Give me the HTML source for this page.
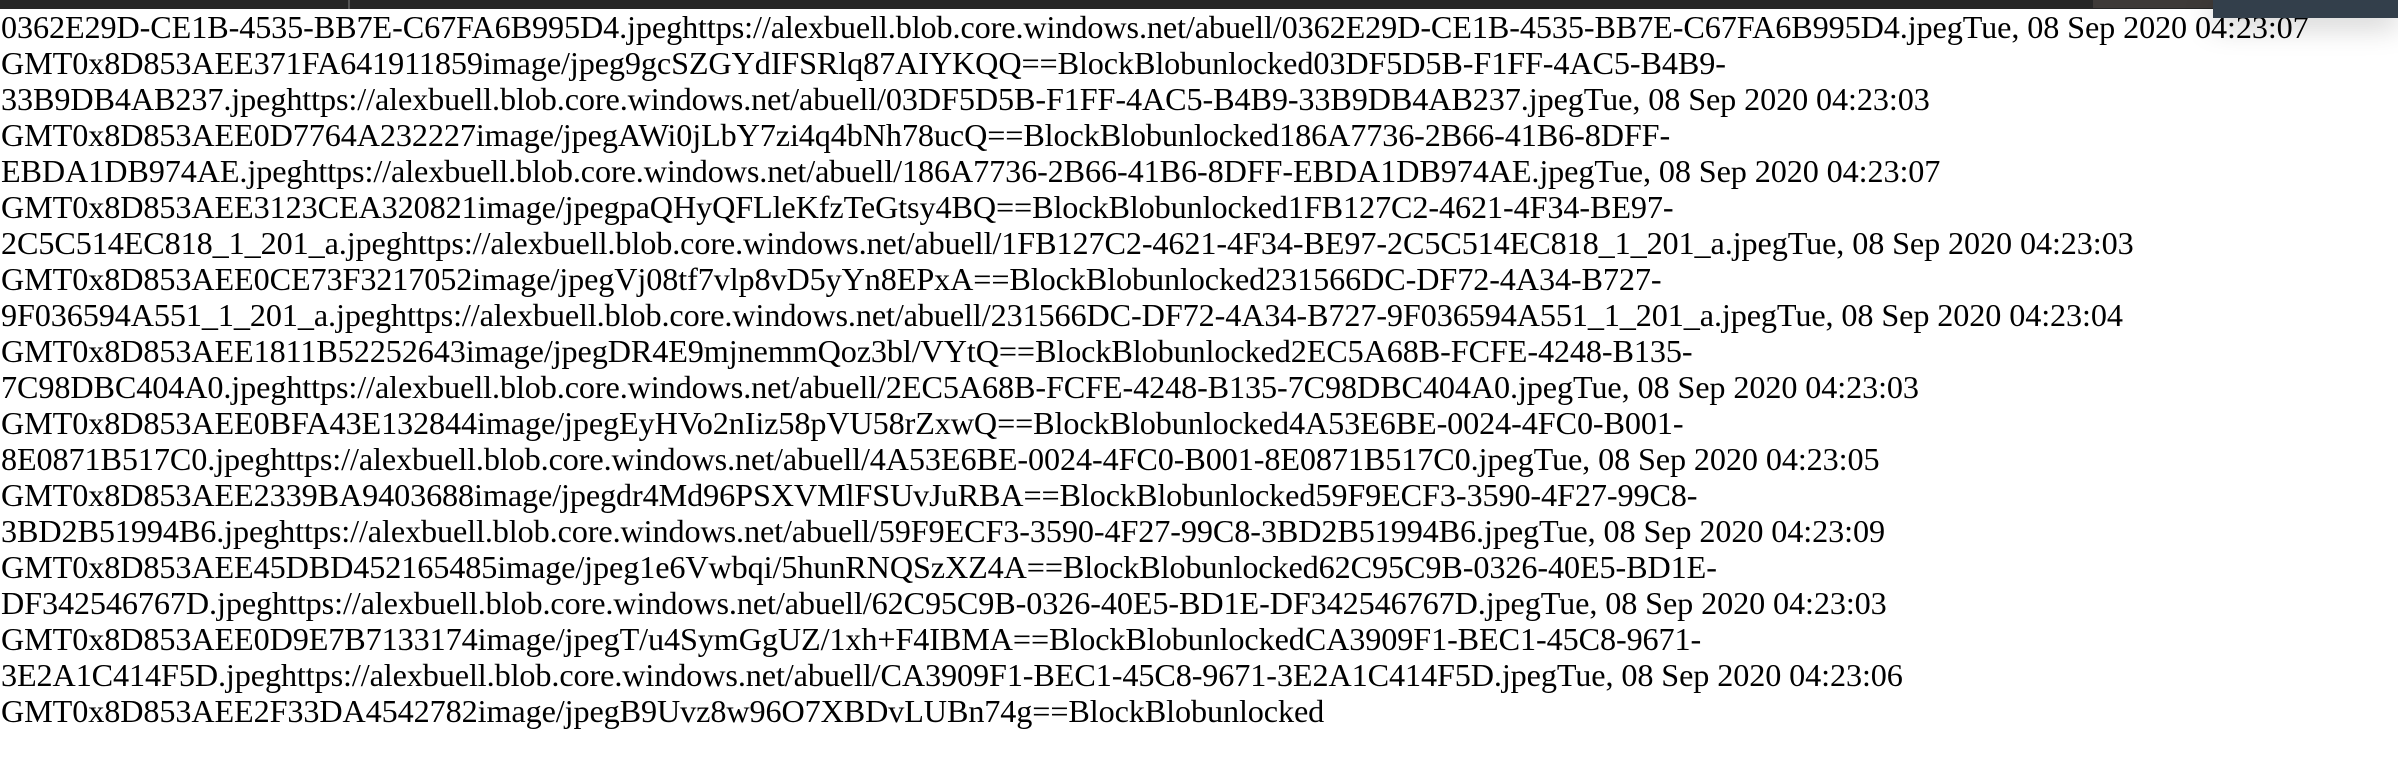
<!DOCTYPE html>
<html><head><meta charset="utf-8"><style>
html,body{margin:0;padding:0;background:#fff;width:2398px;height:764px;overflow:hidden}
.bar{position:absolute;left:0;top:0;width:2398px;height:9px;background:#262626}
.sep{position:absolute;left:348px;top:0;width:2px;height:9px;background:#555}
.bar2{position:absolute;left:2093px;top:0;width:120px;height:8px;background:#3e3a38}
.box{position:absolute;left:2213px;top:0;width:185px;height:18px;background:#333f4b;box-shadow:0 6px 30px rgba(0,0,0,0.25)}
.t{position:absolute;left:1px;top:9px;font-family:"Liberation Serif",serif;font-size:32.2px;line-height:36px;color:#000;white-space:nowrap;letter-spacing:-0.1px}
</style></head><body>
<div class="t">0362E29D-CE1B-4535-BB7E-C67FA6B995D4.jpeghttps://alexbuell.blob.core.windows.net/abuell/0362E29D-CE1B-4535-BB7E-C67FA6B995D4.jpegTue, 08 Sep 2020 04:23:07<br>
GMT0x8D853AEE371FA641911859image/jpeg9gcSZGYdIFSRlq87AIYKQQ==BlockBlobunlocked03DF5D5B-F1FF-4AC5-B4B9-<br>
33B9DB4AB237.jpeghttps://alexbuell.blob.core.windows.net/abuell/03DF5D5B-F1FF-4AC5-B4B9-33B9DB4AB237.jpegTue, 08 Sep 2020 04:23:03<br>
GMT0x8D853AEE0D7764A232227image/jpegAWi0jLbY7zi4q4bNh78ucQ==BlockBlobunlocked186A7736-2B66-41B6-8DFF-<br>
EBDA1DB974AE.jpeghttps://alexbuell.blob.core.windows.net/abuell/186A7736-2B66-41B6-8DFF-EBDA1DB974AE.jpegTue, 08 Sep 2020 04:23:07<br>
GMT0x8D853AEE3123CEA320821image/jpegpaQHyQFLleKfzTeGtsy4BQ==BlockBlobunlocked1FB127C2-4621-4F34-BE97-<br>
2C5C514EC818_1_201_a.jpeghttps://alexbuell.blob.core.windows.net/abuell/1FB127C2-4621-4F34-BE97-2C5C514EC818_1_201_a.jpegTue, 08 Sep 2020 04:23:03<br>
GMT0x8D853AEE0CE73F3217052image/jpegVj08tf7vlp8vD5yYn8EPxA==BlockBlobunlocked231566DC-DF72-4A34-B727-<br>
9F036594A551_1_201_a.jpeghttps://alexbuell.blob.core.windows.net/abuell/231566DC-DF72-4A34-B727-9F036594A551_1_201_a.jpegTue, 08 Sep 2020 04:23:04<br>
GMT0x8D853AEE1811B52252643image/jpegDR4E9mjnemmQoz3bl/VYtQ==BlockBlobunlocked2EC5A68B-FCFE-4248-B135-<br>
7C98DBC404A0.jpeghttps://alexbuell.blob.core.windows.net/abuell/2EC5A68B-FCFE-4248-B135-7C98DBC404A0.jpegTue, 08 Sep 2020 04:23:03<br>
GMT0x8D853AEE0BFA43E132844image/jpegEyHVo2nIiz58pVU58rZxwQ==BlockBlobunlocked4A53E6BE-0024-4FC0-B001-<br>
8E0871B517C0.jpeghttps://alexbuell.blob.core.windows.net/abuell/4A53E6BE-0024-4FC0-B001-8E0871B517C0.jpegTue, 08 Sep 2020 04:23:05<br>
GMT0x8D853AEE2339BA9403688image/jpegdr4Md96PSXVMlFSUvJuRBA==BlockBlobunlocked59F9ECF3-3590-4F27-99C8-<br>
3BD2B51994B6.jpeghttps://alexbuell.blob.core.windows.net/abuell/59F9ECF3-3590-4F27-99C8-3BD2B51994B6.jpegTue, 08 Sep 2020 04:23:09<br>
GMT0x8D853AEE45DBD452165485image/jpeg1e6Vwbqi/5hunRNQSzXZ4A==BlockBlobunlocked62C95C9B-0326-40E5-BD1E-<br>
DF342546767D.jpeghttps://alexbuell.blob.core.windows.net/abuell/62C95C9B-0326-40E5-BD1E-DF342546767D.jpegTue, 08 Sep 2020 04:23:03<br>
GMT0x8D853AEE0D9E7B7133174image/jpegT/u4SymGgUZ/1xh+F4IBMA==BlockBlobunlockedCA3909F1-BEC1-45C8-9671-<br>
3E2A1C414F5D.jpeghttps://alexbuell.blob.core.windows.net/abuell/CA3909F1-BEC1-45C8-9671-3E2A1C414F5D.jpegTue, 08 Sep 2020 04:23:06<br>
GMT0x8D853AEE2F33DA4542782image/jpegB9Uvz8w96O7XBDvLUBn74g==BlockBlobunlocked</div>
<div class="bar"></div><div class="sep"></div><div class="bar2"></div><div class="box"></div>
</body></html>
